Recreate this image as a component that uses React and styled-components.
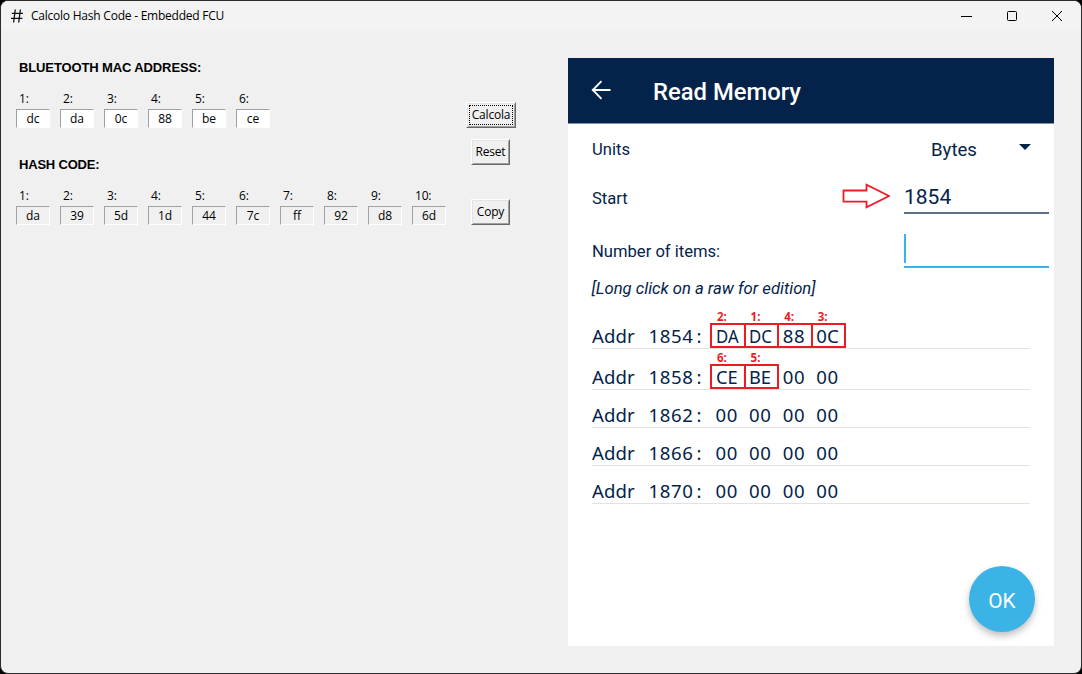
import React from "react";
import styled, { createGlobalStyle, css } from "styled-components";

const NAVY = "#04234a";
const SKY = "#3cb3e6";
const RED = "#ed1c24";

const GlobalStyle = createGlobalStyle`
  * { box-sizing: border-box; }
  body { margin: 0; background: #000; overflow: hidden; }
`;

const Window = styled.div`
  width: 1082px;
  height: 674px;
  border: 1px solid #2b2b2d;
  border-radius: 8px;
  background: #f0f0f0;
  overflow: hidden;
  display: flex;
  flex-direction: column;
  color: #000;
  font-family: "Open Sans", "Noto Sans", sans-serif;
  font-size: 12px;
`;

const TitleBar = styled.header`
  height: 30px;
  flex: none;
  background: #f3f3f3;
  display: flex;
  align-items: center;
  padding: 0 1px 0 9px;
`;

const Title = styled.h1`
  margin: 0 auto 0 7px;
  font-size: 12px;
  font-weight: 400;
  letter-spacing: -0.23px;
  line-height: 16px;
  white-space: nowrap;
`;

const WindowButtons = styled.div`
  display: flex;
  align-items: center;
  height: 28px;
`;

const WindowButton = styled.div`
  width: 45.5px;
  display: flex;
  justify-content: center;
  svg { display: block; }
`;

const Body = styled.main`
  display: flex;
  align-items: flex-start;
  padding: 27px 0 0 15px;
`;

const Codes = styled.section`
  width: 450px;
`;

const Group = styled.div`
  height: 97px;
  padding-top: 1px;
`;

const Heading = styled.h2`
  margin: 0 0 15px 3px;
  font: 700 13px/17px "Liberation Sans", Arial, sans-serif;
  letter-spacing: ${(p) => p.$spacing || 0}px;
  white-space: nowrap;
`;

const Fields = styled.div`
  display: flex;
  gap: 10px;
`;

const Field = styled.label`
  width: 34px;
  display: flex;
  flex-direction: column;
`;

const FieldName = styled.span`
  height: 18px;
  line-height: 15px;
  padding-left: 3px;
  letter-spacing: -0.2px;
`;

const FieldBox = styled.span`
  height: 19px;
  border: 1px solid;
  border-color: #a0a0a0 #fff #fff #a0a0a0;
  background: ${(p) => (p.$readOnly ? "#f0f0f0" : "#fff")};
  line-height: 18px;
  text-align: center;
  letter-spacing: -0.1px;
`;

const Actions = styled.div`
  width: 50px;
  padding-top: 44px;
  display: flex;
  flex-direction: column;
  align-items: flex-start;
`;

const ActionButton = styled.button`
  width: ${(p) => (p.$focused ? 50 : 39)}px;
  height: 26px;
  margin: ${(p) => p.$top || 0}px 0 0 ${(p) => (p.$focused ? 0 : 5)}px;
  padding: 1px;
  border: 1px solid;
  border-color: #fff #696969 #696969 #fff;
  box-shadow: inset 1px 1px #e3e3e3, inset -1px -1px #a0a0a0;
  background: #f0f0f0;
  color: #000;
  font: inherit;
  letter-spacing: -0.2px;
  line-height: 18px;
  white-space: nowrap;
  display: flex;
  align-items: center;
  justify-content: center;
`;

const FocusRing = styled.span`
  width: 44px;
  height: 20px;
  border: 1px dotted #000;
  display: flex;
  align-items: center;
  justify-content: center;
`;

const Phone = styled.section`
  width: 486px;
  height: 588px;
  margin-left: 52px;
  background: #fff;
  color: ${NAVY};
  font-family: Roboto, sans-serif;
  display: flex;
  flex-direction: column;
`;

const AppBar = styled.div`
  height: 66px;
  flex: none;
  background: ${NAVY};
  border-bottom: 1px solid #8291a8;
  display: flex;
  align-items: center;
  padding: 0 0 1px 23px;
  svg { display: block; }
`;

const ScreenName = styled.h2`
  margin: 3px 0 0 42px;
  color: #fff;
  font-size: 23.8px;
  font-weight: 500;
  line-height: 28px;
  white-space: nowrap;
`;

const Setting = styled.div`
  height: ${(p) => p.$height}px;
  padding: 0 5px 0 24px;
  display: flex;
  align-items: center;
  font-size: 16.6px;
  line-height: 20px;
`;

const SettingName = styled.span`
  margin-right: auto;
  padding-top: ${(p) => p.$drop || 0}px;
`;

const UnitSelect = styled.span`
  width: 118px;
  padding-right: 18px;
  display: flex;
  align-items: center;
  justify-content: space-between;
  font-size: 18.6px;
  svg { display: block; margin-bottom: 5px; }
`;

const Pointer = styled.svg`
  display: block;
  margin: 2px 14px 0 0;
`;

const Entry = styled.span`
  width: 145px;
  height: 36px;
  align-self: flex-end;
  border-bottom: 2px solid ${(p) => (p.$active ? SKY : "#5d6f89")};
  font-size: 21px;
  line-height: 39px;
`;

const Caret = styled.span`
  display: block;
  width: 2px;
  height: 29px;
  margin-top: 2px;
  background: ${SKY};
`;

const Hint = styled.p`
  margin: 11px 0 14px 23.5px;
  font-size: 16.65px;
  font-style: italic;
  line-height: 20px;
  white-space: nowrap;
`;

const MemoryRow = styled.div`
  height: ${(p) => p.$height}px;
  margin: 0 24px;
  border-bottom: 1px solid #dfe3e9;
  display: flex;
  align-items: flex-end;
  font-family: "Noto Sans", sans-serif;
  font-size: 18.6px;
  line-height: 25px;
`;

const Word = styled.span`
  width: ${(p) => p.$width}px;
  letter-spacing: ${(p) => p.$spacing}px;
  white-space: nowrap;
`;

const Colon = styled.span`
  margin-left: 3px;
`;

const marked = css`
  &::after {
    content: "";
    position: absolute;
    inset: 0 -2px 0 0;
    border: 2px solid ${RED};
  }
`;

const Byte = styled.span`
  position: relative;
  width: 33.6px;
  height: 25px;
  padding-left: 5.5px;
  white-space: nowrap;
  ${(p) => p.$marked && marked}
`;

const Digits = styled.span`
  display: inline-block;
  letter-spacing: ${(p) => (p.$squeeze ? 0 : 0.6)}px;
  transform: scaleX(${(p) => p.$squeeze || 1});
  transform-origin: left;
`;

const Badge = styled.span`
  position: absolute;
  left: 7px;
  top: -14px;
  color: ${RED};
  font: 700 11.5px/15px "Open Sans", sans-serif;
`;

const OkButton = styled.button`
  width: 66px;
  height: 66px;
  margin: auto 19px 14px auto;
  padding: 3px 0 0;
  border: 0;
  border-radius: 50%;
  background: ${SKY};
  box-shadow: 0 4px 7px rgba(0, 0, 0, 0.25);
  color: #fff;
  font: 400 20.8px/26px Roboto, sans-serif;
`;

const mac = ["dc", "da", "0c", "88", "be", "ce"];
const hash = ["da", "39", "5d", "1d", "44", "7c", "ff", "92", "d8", "6d"];

const zero = { value: "00" };
const memory = [
  {
    address: "1854",
    height: 36,
    bytes: [
      { value: "DA", mark: "2:", squeeze: 0.9 },
      { value: "DC", mark: "1:", squeeze: 0.9 },
      { value: "88", mark: "4:" },
      { value: "0C", mark: "3:", squeeze: 1 },
    ],
  },
  {
    address: "1858",
    height: 41,
    bytes: [
      { value: "CE", mark: "6:", squeeze: 0.98 },
      { value: "BE", mark: "5:", squeeze: 0.98 },
      zero,
      zero,
    ],
  },
  { address: "1862", height: 38, bytes: [zero, zero, zero, zero] },
  { address: "1866", height: 38, bytes: [zero, zero, zero, zero] },
  { address: "1870", height: 38, bytes: [zero, zero, zero, zero] },
];

function CodeGroup({ title, spacing, values, readOnly }) {
  return (
    <Group>
      <Heading $spacing={spacing}>{title}</Heading>
      <Fields>
        {values.map((value, i) => (
          <Field key={i}>
            <FieldName>{i + 1}:</FieldName>
            <FieldBox $readOnly={readOnly}>{value}</FieldBox>
          </Field>
        ))}
      </Fields>
    </Group>
  );
}

export default function App() {
  return (
    <>
      <GlobalStyle />
      <Window>
        <TitleBar>
          <svg width="14" height="14" viewBox="0 0 14 14" fill="none" stroke="#111" strokeWidth="1.3">
            <path d="M5.3 .5 3.600 13.500M10.400 .5 8.700 13.500M1.800 4.400H13M1 9.300h11.400" />
          </svg>
          <Title>Calcolo Hash Code - Embedded FCU</Title>
          <WindowButtons>
            <WindowButton>
              <svg width="11" height="10"><path d="M0 5.5h11" stroke="#000" /></svg>
            </WindowButton>
            <WindowButton>
              <svg width="10" height="10"><rect x=".5" y=".5" width="9" height="9" rx="1" fill="none" stroke="#000" /></svg>
            </WindowButton>
            <WindowButton>
              <svg width="10" height="10"><path d="M0 0l10 10M10 0 0 10" stroke="#000" /></svg>
            </WindowButton>
          </WindowButtons>
        </TitleBar>
        <Body>
          <Codes>
            <CodeGroup title="BLUETOOTH MAC ADDRESS:" spacing={-0.12} values={mac} />
            <CodeGroup title="HASH CODE:" spacing={-0.2} values={hash} readOnly />
          </Codes>
          <Actions>
            <ActionButton $focused><FocusRing>Calcola</FocusRing></ActionButton>
            <ActionButton $top={11}>Reset</ActionButton>
            <ActionButton $top={34}>Copy</ActionButton>
          </Actions>
          <Phone>
            <AppBar>
              <svg width="20" height="20" viewBox="0 0 20 20" fill="none" stroke="#fff" strokeWidth="1.9">
                <path d="M19.5 10H2M10.5 1.2 1.8 10l8.7 8.8" />
              </svg>
              <ScreenName>Read Memory</ScreenName>
            </AppBar>
            <Setting $height={51}>
              <SettingName $drop={1}>Units</SettingName>
              <UnitSelect>
                Bytes
                <svg width="12" height="6"><path d="M0 0h12L6 6z" fill={NAVY} /></svg>
              </UnitSelect>
            </Setting>
            <Setting $height={39}>
              <SettingName $drop={8}>Start</SettingName>
              <Pointer width="48" height="26" fill="none" stroke={RED} strokeWidth="1.8">
                <path d="M1.5 7.5h23V1.8L47 13 24.500 24.400v-5.700h-23z" />
              </Pointer>
              <Entry>1854</Entry>
            </Setting>
            <Setting $height={54}>
              <SettingName $drop={22}>Number of items:</SettingName>
              <Entry $active><Caret /></Entry>
            </Setting>
            <Hint>[Long click on a raw for edition]</Hint>
            {memory.map((row) => (
              <MemoryRow key={row.address} $height={row.height}>
                <Word $width={56.5} $spacing={0.1}>Addr</Word>
                <Word $width={61.5} $spacing={0.6}>{row.address}<Colon>:</Colon></Word>
                {row.bytes.map((byte, i) => (
                  <Byte key={i} $marked={!!byte.mark}>
                    {byte.mark && <Badge>{byte.mark}</Badge>}
                    <Digits $squeeze={byte.squeeze}>{byte.value}</Digits>
                  </Byte>
                ))}
              </MemoryRow>
            ))}
            <OkButton>OK</OkButton>
          </Phone>
        </Body>
      </Window>
    </>
  );
}
